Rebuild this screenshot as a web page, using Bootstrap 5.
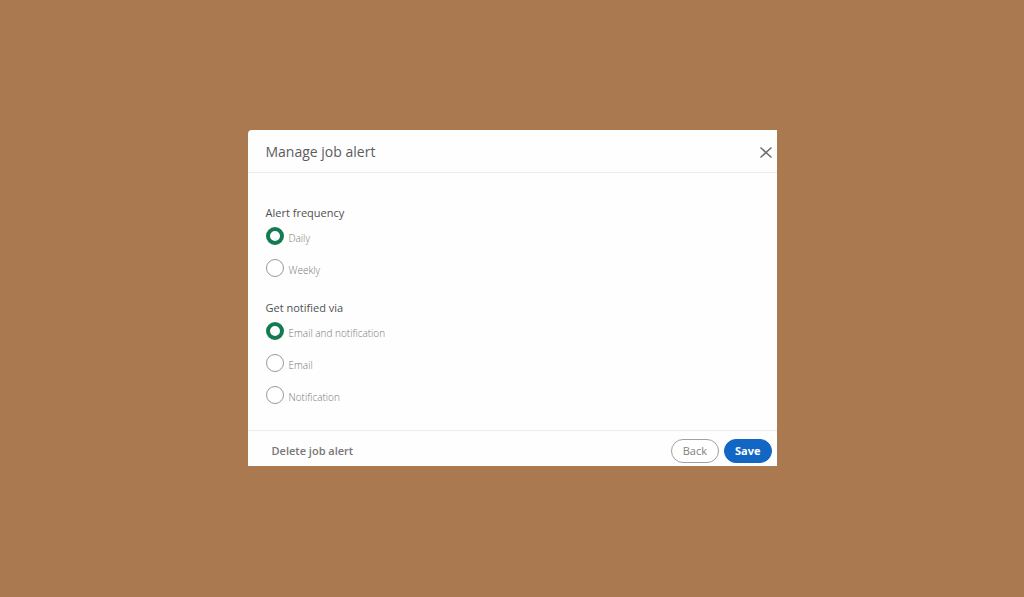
<!DOCTYPE html>
<html lang="en">
<head>
<meta charset="utf-8">
<meta name="viewport" content="width=device-width, initial-scale=1">
<title>Manage job alert</title>
<link href="https://cdn.jsdelivr.net/npm/bootstrap@5.3.0/dist/css/bootstrap.min.css" rel="stylesheet">
<style>
  body { background: #aa794f; font-family: "Open Sans", "Noto Sans", sans-serif; }
  .page { padding-bottom: 1px; }
  .alert-dialog { max-width: 529px; background: #fefefe; border-radius: 4px 0 0 0; }
  .dialog-head { height: 43px; padding: 1px 4px 0 18px; border-bottom: 1px solid #ebebeb; }
  .dialog-title { font-size: 14px; line-height: 20px; color: #5c5c5c; }
  .close-btn { width: 14px; height: 14px; color: #6e6e6e; }
  .dialog-body { padding: 32px 18px 19px; }
  .dialog-body fieldset + fieldset { margin-top: 16px; }
  .dialog-body legend { font-size: 11px; line-height: 15px; color: #505050; }
  .option { height: 32px; gap: 5px; }
  .option input { appearance: none; width: 18px; height: 18px; margin: 0; border: 1px solid #999; border-radius: 50%; background: #fff; }
  .option input:checked { border: 4px solid #147a50; }
  .option label { font-size: 10px; line-height: 16px; padding-top: 4px; color: #777; font-weight: 300; }
  .dialog-foot { padding: 8px 5px 3px 24px; border-top: 1px solid #ebebeb; }
  .delete-link { font-size: 11px; line-height: 16px; color: #777; font-weight: 600; }
  .actions { gap: 5px; }
  .pill { height: 24px; font-size: 11px; line-height: 16px; }
  .pill-back { padding: 0 11px; color: #808080; background: #fff; border: 1px solid #a0a0a0; }
  .pill-save { padding: 0 10px; color: #fff; background: #1266c4; border: 1px solid #1266c4; font-weight: 700; }
</style>
</head>
<body>
<main class="page min-vh-100 d-flex align-items-center justify-content-center">
  <section class="alert-dialog w-100" role="dialog" aria-labelledby="dialogTitle">
    <header class="dialog-head d-flex align-items-center justify-content-between">
      <h1 class="dialog-title fw-normal m-0" id="dialogTitle">Manage job alert</h1>
      <button type="button" class="close-btn btn p-0 border-0 d-flex" aria-label="Close">
        <svg width="14" height="14" viewBox="0 0 14 14" fill="none" stroke="currentColor" stroke-width="1.5"><path d="M1.5 2.5l11 10M12.5 2.5l-11 10"/></svg>
      </button>
    </header>
    <form id="alertForm" class="dialog-body">
      <fieldset>
        <legend class="m-0">Alert frequency</legend>
        <div class="option d-flex align-items-center"><input type="radio" name="frequency" id="daily" checked><label for="daily">Daily</label></div>
        <div class="option d-flex align-items-center"><input type="radio" name="frequency" id="weekly"><label for="weekly">Weekly</label></div>
      </fieldset>
      <fieldset>
        <legend class="m-0">Get notified via</legend>
        <div class="option d-flex align-items-center"><input type="radio" name="channel" id="both" checked><label for="both">Email and notification</label></div>
        <div class="option d-flex align-items-center"><input type="radio" name="channel" id="email"><label for="email">Email</label></div>
        <div class="option d-flex align-items-center"><input type="radio" name="channel" id="notification"><label for="notification">Notification</label></div>
      </fieldset>
    </form>
    <footer class="dialog-foot d-flex align-items-center justify-content-between">
      <button type="button" class="delete-link btn p-0 border-0">Delete job alert</button>
      <div class="actions d-flex">
        <button type="button" class="pill pill-back btn rounded-pill d-flex align-items-center">Back</button>
        <button type="submit" form="alertForm" class="pill pill-save btn rounded-pill d-flex align-items-center">Save</button>
      </div>
    </footer>
  </section>
</main>
<script src="https://cdn.jsdelivr.net/npm/bootstrap@5.3.0/dist/js/bootstrap.bundle.min.js"></script>
</body>
</html>
